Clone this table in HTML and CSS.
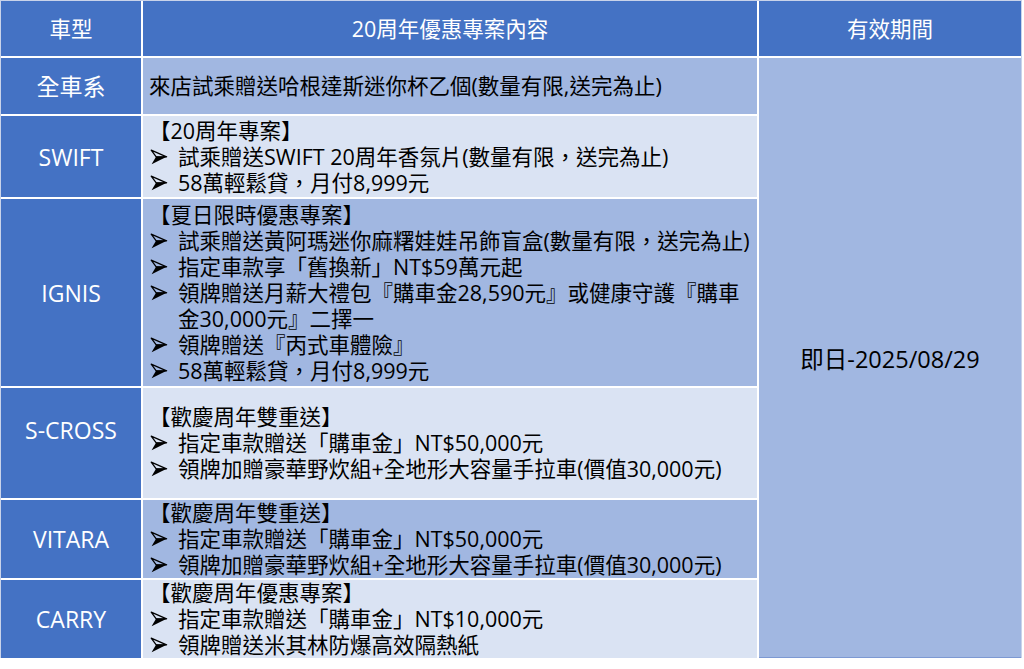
FILE: index.html
```html
<!DOCTYPE html>
<html lang="zh-Hant">
<head>
<meta charset="utf-8">
<title>20周年優惠專案</title>
<link rel="stylesheet" href="styles.css">
</head>
<body>
<svg class="defs" width="0" height="0" aria-hidden="true">
  <symbol id="arrow" viewBox="0 0 18 16">
    <path d="M1.2 1.2 L16.6 7.8 L6.2 7.8 Z" fill="none" stroke="#000" stroke-width="1.3" stroke-linejoin="round"/>
    <path d="M6.2 7.6 L17.2 7.6 L1.6 15.2 Z" fill="#000"/>
  </symbol>
</svg>
<table class="promo">
  <colgroup><col class="c1"><col class="c2"><col class="c3"></colgroup>
  <thead>
    <tr class="r-head"><th>車型</th><th>20周年優惠專案內容</th><th class="last">有效期間</th></tr>
  </thead>
  <tbody>
    <tr class="r-all">
      <td class="model">全車系</td>
      <td class="detail mid"><div class="line">來店試乘贈送哈根達斯迷你杯乙個(數量有限,送完為止)</div></td>
      <td class="period" rowspan="6">即日-2025/08/29</td>
    </tr>
    <tr class="r-swift">
      <td class="model">SWIFT</td>
      <td class="detail light">
        <div class="line">【20周年專案】</div>
        <div class="item"><svg class="arw"><use href="#arrow"/></svg><span>試乘贈送SWIFT 20周年香氛片(數量有限，送完為止)</span></div>
        <div class="item"><svg class="arw"><use href="#arrow"/></svg><span>58萬輕鬆貸，月付8,999元</span></div>
      </td>
    </tr>
    <tr class="r-ignis">
      <td class="model">IGNIS</td>
      <td class="detail mid">
        <div class="line">【夏日限時優惠專案】</div>
        <div class="item"><svg class="arw"><use href="#arrow"/></svg><span>試乘贈送黃阿瑪迷你麻糬娃娃吊飾盲盒(數量有限，送完為止)</span></div>
        <div class="item"><svg class="arw"><use href="#arrow"/></svg><span>指定車款享「舊換新」NT$59萬元起</span></div>
        <div class="item"><svg class="arw"><use href="#arrow"/></svg><span>領牌贈送月薪大禮包『購車金28,590元』或健康守護『購車<br>金30,000元』二擇一</span></div>
        <div class="item"><svg class="arw"><use href="#arrow"/></svg><span>領牌贈送『丙式車體險』</span></div>
        <div class="item"><svg class="arw"><use href="#arrow"/></svg><span>58萬輕鬆貸，月付8,999元</span></div>
      </td>
    </tr>
    <tr class="r-scross">
      <td class="model raised">S-CROSS</td>
      <td class="detail light">
        <div class="line">【歡慶周年雙重送】</div>
        <div class="item"><svg class="arw"><use href="#arrow"/></svg><span>指定車款贈送「購車金」NT$50,000元</span></div>
        <div class="item"><svg class="arw"><use href="#arrow"/></svg><span>領牌加贈豪華野炊組+全地形大容量手拉車(價值30,000元)</span></div>
      </td>
    </tr>
    <tr class="r-vitara">
      <td class="model">VITARA</td>
      <td class="detail mid">
        <div class="line">【歡慶周年雙重送】</div>
        <div class="item"><svg class="arw"><use href="#arrow"/></svg><span>指定車款贈送「購車金」NT$50,000元</span></div>
        <div class="item"><svg class="arw"><use href="#arrow"/></svg><span>領牌加贈豪華野炊組+全地形大容量手拉車(價值30,000元)</span></div>
      </td>
    </tr>
    <tr class="r-carry">
      <td class="model bottom">CARRY</td>
      <td class="detail light bottom">
        <div class="line">【歡慶周年優惠專案】</div>
        <div class="item"><svg class="arw"><use href="#arrow"/></svg><span>指定車款贈送「購車金」NT$10,000元</span></div>
        <div class="item"><svg class="arw"><use href="#arrow"/></svg><span>領牌贈送米其林防爆高效隔熱紙</span></div>
      </td>
    </tr>
  </tbody>
</table>
</body>
</html>
```
FILE: styles.css
```css
html, body {
  margin: 0;
  padding: 0;
  background: #ffffff;
}
body {
  font-family: "Open Sans", "Noto Sans CJK TC", sans-serif;
  color: #000;
}
.defs {
  position: absolute;
  width: 0;
  height: 0;
  overflow: hidden;
}
.promo {
  table-layout: fixed;
  width: 1022px;
  border-collapse: separate;
  border-spacing: 0;
  border-top: 1px solid #c9d3ea;
  border-left: 1px solid #c9d3ea;
  border-right: 1px solid #c9d3ea;
}
.c1 { width: 142px; }
.c2 { width: 616px; }
.c3 { width: 262px; }

.promo th, .promo td {
  padding: 0;
  border-right: 2px solid #ffffff;
  border-bottom: 2px solid #ffffff;
  vertical-align: middle;
}
.promo th.last { border-right: none; }

.r-head { height: 57px; }
.r-all { height: 58px; }
.r-swift { height: 83px; }
.r-ignis { height: 189px; }
.r-scross { height: 112px; }
.r-vitara { height: 79px; }
.r-carry { height: 78px; }

.promo th {
  background: #4472c4;
  color: #ffffff;
  font-weight: normal;
  font-size: 21.5px;
  text-align: center;
  line-height: 26px;
}
.model {
  background: #4472c4;
  color: #ffffff;
  font-size: 23px;
  text-align: center;
  line-height: 26px;
}
.model.raised { padding-bottom: 26px; }
.detail {
  font-size: 21.5px;
  line-height: 26px;
  padding-left: 6px !important;
  white-space: nowrap;
}
.mid { background: #a1b7e1; }
.light { background: #dae3f3; }
.bottom { border-bottom: none !important; }
.period {
  background: #a1b7e1;
  border-right: none !important;
  border-bottom: 1px solid #7d99d3 !important;
  text-align: center;
  font-size: 23.5px;
}
.item {
  display: flex;
  align-items: flex-start;
}
.arw {
  flex: 0 0 auto;
  width: 18px;
  height: 16px;
  margin: 5px 10px 0 1px;
}
```
